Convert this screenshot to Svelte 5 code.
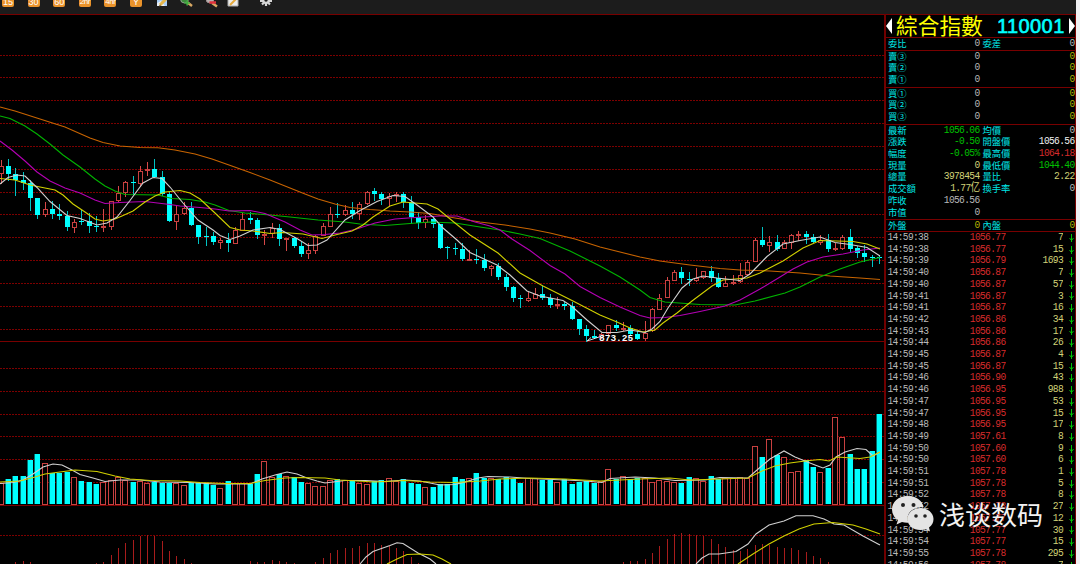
<script>
    const step = 7.318;
    const x = (i) => 1.3 + i * step;

    // kind, high, low, body top, body bottom, volume top
    const candles = `
r 160 184 166 173.5 483|c 158.5 180.5 165.5 174 479|c 167.5 196 174 180 476|c 172 189.5 180 182.5 476|c 180 211 182.5 197.5 460
c 197.5 218.5 197.5 214.5 453.5|r 201.5 217 209 215 462.5|c 200.5 218.5 209 214 472.5|c 203.5 220 214 216 472.5|c 211 231 215.5 227 471.5
r 218.5 233 221.5 227.5 476.5|c 210 225 220.5 221.5 480.5|c 213 232.5 221 226 482|c 215.5 231.5 225.5 226.5 484|r 209 232 226 227.5 482
r 200.5 230 200.5 226.5 479.5|r 186 202 192.5 201 476.5|r 181 196.5 182 193 479.5|c 175.5 194.5 181.5 182.5 482|r 166 187 170.5 183.5 480.5
r 161.5 176 169 171 483|c 158.5 178 169 176.5 481.5|c 171 195.5 176.5 193.5 482.5|c 192 221.5 193.5 221 482.5|r 205 230 213.5 221.5 482.5
r 201.5 214.5 207.5 213.5 484.5|c 201.5 225.5 208 224.5 482.5|c 224.5 243.5 224.5 236.5 483|c 226.5 245.5 236 237 483|c 232 245 236 241.5 485
r 237.5 248.5 240 242.5 488|c 233 252 239.5 243 481|r 226.5 243.5 230 243.5 483|r 213 230.5 218.5 230.5 483|c 211.5 223.5 218 220 483.5
c 217.5 238.5 220 234.5 473.5|r 229.5 245 233.5 235 461|r 222.5 238 227.5 233.5 476.5|c 223.5 246 228 238.5 473.5|r 237.5 250.5 238 239.5 475.5
c 236.5 247.5 238 246 477|c 241 257 246 253.5 482|r 242.5 258.5 250 253.5 483|r 235 253.5 235.5 250.5 486|r 222.5 235.5 225.5 235.5 485.5
r 207 226.5 214 226.5 479.5|c 203 217.5 213.5 215 478.5|r 204.5 215.5 209.5 215 480|c 202 219 209.5 213.5 480|r 202 219.5 203.5 213.5 483
r 190.5 204.5 191.5 204 483.5|c 187.5 200.5 191 194 480.5|c 192 205 193.5 199 480|r 192.5 206.5 195.5 199 477.5|r 192 202 194 195.5 481
c 192 207.5 193.5 201.5 478.5|c 196 223.5 201.5 217 483|c 212 228.5 216.5 223 484|r 215 228 219 223 486.5|c 215.5 228 218.5 224 487
c 224 249 224 247.5 483.5|c 245.5 258.5 247 248 483.5|c 243 255 248 249 476.5|c 243 260.5 249 259 478.5|r 249.5 261 259 261 477.5
c 248.5 263.5 259 260 472.5|c 254 271 259.5 268 477.5|r 265 276 266 268.5 477.5|c 263 280 266 277 479|c 274 291 277 287 477
c 286 301.5 287 298 478.5|c 295 307.5 297.5 299 482.5|r 291.5 301.5 298 300.5 477.5|r 288 299 294 298.5 478|c 285.5 300 294 298 480
c 294 307.5 297.5 305 479.5|r 297 308.5 304 305.5 481.5|c 300.5 309.5 303.5 306 478.5|c 301.5 320 306 319 484|c 319 335 319 329 481.5
c 325 341.5 329 336 481|c 330 338.5 336 337.5 483|r 332.5 339 333.5 338 480.5|r 324.5 335 325 334 468.5|c 320 331 324.5 328 479
r 322 330.5 327.5 329 475.5|c 325 336 327.5 333.5 479|c 330.5 339.5 333.5 338.5 478|r 321 340.5 332.5 339 477.5|r 307.5 331.5 309 331 481.5
r 293.5 310 297.5 309.5 479.5|r 277 298 280 297.5 480.5|r 269.5 281 272 281 481.5|c 266.5 283.5 272 278 482.5|c 272 285.5 278.5 280 477
r 268 282 277.5 280.5 478|r 270.5 279 271 278 480.5|c 265.5 281.5 271 278 475.5|c 272.5 288 278 286.5 479|r 276 287 282.5 287 478
r 275 285 281.5 282.5 478|r 263 282.5 275 281.5 476.5|r 259.5 275.5 261.5 275 478|r 238 262 239.5 261.5 445.5|c 226.5 246.5 239.5 244.5 457
r 235.5 252 242 245.5 438.5|c 235 251 242 248.5 455|r 240 249 241.5 248.5 456.5|r 233.5 248.5 234.5 242.5 472|r 230.5 240.5 233.5 234.5 470.5
c 230.5 244 234 236.5 459.5|c 233.5 243 236.5 241.5 466.5|r 235 245 240 242.5 471.5|c 233.5 251.5 240 249 467.5|r 243 251 248 250 416.5
r 235 250 236.5 248.5 436.5|c 229 251.5 236.5 248.5 454|c 246 258 248 253 469|c 244.5 261.5 252.5 257 469|c 254.5 267 257 258 450.5
c 254.5 263.5 257 258 414`
        .trim()
        .split(/[|\n]/)
        .map((row, i) => {
            const [kind, ...n] = row.split(" ");
            const [high, low, top, bottom, vol] = n.map((v) => Math.round(+v));
            return { kind, x: Math.round(x(i) - 0.5), high, low, top, bottom: Math.max(bottom, top + 1), vol };
        });

    const priceLines = [
        ["orange", "0,107 15,111 40,119 65,127 90,138 103,142.5 120,146 140,147.5 158,147.8 175,150 195,154 212,159 229,165 250,172.5 270,180 290,188 305,194 318,199 335,204 350,207.5 370,209.5 390,211 410,212 430,213.5 455,218 480,222 505,225 530,229 550,233 575,239 600,247 620,252 640,257 660,261 690,265 720,268.5 740,270 770,271 800,273 830,276 860,278 880,279.5"],
        ["green", "0,116 10,118.5 25,126 37,134 50,144 63,155 80,167 95,179 105,186 115,191 125,194.5 158,195 172,198.5 190,199.5 205,202 215,205 229,210.5 245,213 270,215 290,217 318,220 345,222 360,224 385,225.5 410,223.5 430,222 455,223 480,227 500,230 520,234 540,238.5 570,251 600,266 620,277 640,290 650,297.5 665,302 700,304.5 735,305 755,301 785,293 800,287 820,277 840,269 860,262 880,257.5"],
        ["magenta", "0,141 12,150 25,161 37,172 50,181 65,188 80,193 95,200 105,203.5 120,202.5 145,201.5 170,204.5 180,206 200,207.5 215,209 229,211 250,210.5 265,213.5 285,222 300,230 312,235 325,234.5 340,233 355,229.5 375,223 395,219 415,217.5 440,216 457,216 475,222 490,226 500,230 512,239 530,250.5 550,265.5 565,274 580,286.5 600,297.5 620,307 640,315.5 650,318 665,317.5 680,315.5 700,311.5 725,306 740,300 760,289 780,277 793,269 807,262 823,257 843,254 863,250 880,248"],
        ["yellow", "0,178.5 15,180 30,185 45,188 55,190 63,195 73,204 85,212 95,219 103,221 115,219 122,216 133,211 145,202 155,196 165,192 180,190.5 190,193 200,199 215,213 230,227.5 240,230 253,231 270,233.5 283,232.5 303,234 322,238.5 337,234.5 352,231 363,225 373,217 390,206 403,202 427,204 438,209 455,223 470,235 498,253 520,273 543,286 573,301 600,315 617,322 630,328 643,332 655,330 663,323 677,313 692,301 712,286 723,280 747,278 760,273 783,261 803,248 820,240.5 837,241 853,241.5 867,244 880,249"],
        ["white", "0,184 8,177.5 17,175 25,176 37,187.5 50,201.5 67,215.5 80,218.5 97,225 107,223 117,217 130,200.5 143,183 153,177.5 162,178.5 170,187 183,203 198,220 213,230 220,235.5 230,239.5 240,236 253,230 270,227.5 280,229.5 297,238.5 308,245.5 317,245 327,240 345,220 360,210.5 377,201.5 393,195.5 405,196.5 417,205 433,217 443,228 457,240 470,252.5 497,265 510,275 527,291 540,296 563,300.5 572,306.5 587,320 602,332.5 617,332.5 630,330 645,332.5 652,329 660,321.5 668,308 682,288 693,279 703,276 717,278 740,280.5 750,274 767,256.5 783,244 800,240.5 820,237 835,242.5 850,244.5 867,247.5 880,256"],
    ];

    const volumeLines = [
        ["white", "0,483.5 13,482.5 23,480 33,474 43,467 53,464 62,465 72,470 80,474.5 93,478 105,481.5 120,480 140,480 160,482 190,482.5 215,484 250,484 262,479 275,475 287,472 297,474 307,478 317,481 325,483 345,480.5 365,480.5 385,481.5 405,480 420,481 430,483 440,485 455,484.5 465,482 478,478 488,476.5 510,477 530,478.5 565,480 586,481 602,482.5 610,478.5 635,477 655,478 675,480.5 705,480 720,477.5 748,478 757,470 770,459 784,451 795,457 805,461 815,465 823,468 830,465 836,457 845,452 857,448.5 866,449.5 873,456 880,452"],
        ["yellow", "0,482 20,481 35,477 45,474 60,472 75,470 97,471.5 115,476 130,479 150,480.5 180,481 200,482.5 225,483.5 250,483.5 265,480.5 285,478 300,477.5 325,478 340,480 375,482 405,480.5 430,482 455,482.5 480,481 500,479 530,478 565,479 600,481 640,479 670,478 690,480 720,479 748,478 762,471 775,466 790,463 805,461 820,459.5 829,461 837,457 860,458.5 870,457 880,452"],
    ];

    const macdLines = [
        ["white", "360,564 366,557 373,551.5 390,545.5 397,542.7 403,543.5 418,553 430,559 436,564"],
        ["yellow", "387,564 397,559 407,554.5 420,554 433,555 442,559 451,564"],
        ["white", "696,564 702,558 709,554 719,554 736,551.5 748,544 756,534 769,525 784,521 796,515.7 813,515.7 824,519 834,524 844,525 863,536 880,545"],
        ["yellow", "738,564 753,554 769,544 784,536 799,529 814,524 833,522.5 853,525 866,529 880,534"],
    ];

    // first candle index, then bar tops
    const macdBars = [
        [2, [562, 561, 562]],
        [13, [563, 562, 555, 548, 543, 540, 536, 535, 536, 541, 551, 556, 559, 563]],
        [34, [561, 562, 562, 560, 561, 562, 563]],
        [43, [562, 558, 553, 550, 548, 548, 546, 543, 543, 545, 546, 548, 551, 557, 563]],
        [85, [562, 561, 561, 559, 553, 546, 539, 534, 533, 534, 535, 536, 539, 544, 547, 550, 551, 549, 545, 544, 545, 547, 548, 548, 550, 552, 556, 558, 562]],
    ].flatMap(([start, tops]) => tops.map((top, i) => ({ x: Math.round(x(start + i) - 0.5), top })));

    const grid = [55, 77, 100, 123, 146, 169, 192, 214, 237, 260, 283, 306, 329, 368, 391, 414, 436, 459, 482, 535];

    const periods = ["15", "30", "60", "2hr", "4hr", "Y"];

    const asks = ["賣③", "賣②", "賣①"];
    const bids = ["買①", "買②", "買③"];

    const quotes = [
        ["最新", "1056.06", "g", "均價", "0", "w"],
        ["漲跌", "-0.50", "g", "開盤價", "1056.56", "b"],
        ["幅度", "-0.05%", "g", "最高價", "1064.18", "r"],
        ["現量", "0", "y", "最低價", "1044.40", "g"],
        ["總量", "3978454", "y", "量比", "2.22", "y"],
        ["成交額", "1.77亿", "y", "換手率", "0", "w"],
        ["昨收", "1056.56", "w", "", "", "w"],
        ["市值", "0", "w", "", "", "w"],
    ];

    const ticks = [
        ["38", "1056.77", 7], ["38", "1056.77", 15], ["39", "1056.79", 1693], ["40", "1056.87", 7],
        ["40", "1056.87", 57], ["41", "1056.87", 3], ["41", "1056.87", 16], ["42", "1056.86", 34],
        ["43", "1056.86", 17], ["44", "1056.86", 26], ["45", "1056.87", 4], ["45", "1056.87", 15],
        ["46", "1056.90", 43], ["46", "1056.95", 988], ["47", "1056.95", 53], ["47", "1056.95", 15],
        ["48", "1056.95", 17], ["49", "1057.61", 8], ["50", "1057.60", 9], ["50", "1057.60", 6],
        ["51", "1057.78", 1], ["51", "1057.78", 5], ["52", "1057.78", 8], ["52", "1057.78", 27],
        ["53", "1057.77", 12], ["54", "1057.77", 30], ["54", "1057.77", 15], ["55", "1057.78", 295],
        ["56", "1057.78", 7],
    ];
</script>

<div class="screen">
    <div class="window">
        <div class="toolbar">
            {#each periods as p}
                <span class="period" class:small={p.length > 2}>{p}</span>
            {/each}
            <svg class="tools" width="125" height="8" viewBox="0 0 125 8">
                <rect x="1" y="0" width="10" height="6" fill="#a9cdf5" />
                <path d="M1 3L5 1L9 6H1Z" fill="#e8eef5" />
                <path d="M4 5L10 -1" stroke="#e5b64c" stroke-width="3" />
                <path d="M3 6L5 5" stroke="#8a6a30" />
                <circle cx="28.500" cy="-1" r="4" fill="#3b8b3b" stroke="#8fa08f" />
                <path d="M31 2L36 6" stroke="#d9a964" stroke-width="2.500" />
                <path d="M28.500 3H34M31.200 0.500V5.500" stroke="#3fae3f" stroke-width="1.600" />
                <circle cx="54" cy="-1" r="4" fill="#b9b0b0" stroke="#a09090" />
                <path d="M56 3L61 6.500" stroke="#d9a964" stroke-width="2.500" />
                <path d="M53.500 2.500H60" stroke="#e0303c" stroke-width="2.500" />
                <path d="M72 -1H82V6H72Z" fill="#ececec" stroke="#aaa" />
                <path d="M74 5L80 -1" stroke="#e5a93c" stroke-width="2" />
                <circle cx="110" cy="0" r="4" fill="#d5d5d5" />
                <path d="M104 1H107M113 1H116M106 4.500L108 2.500M114 4.500L112 2.500M110 3V6" stroke="#d5d5d5" stroke-width="2.200" />
                <circle cx="110" cy="0" r="1.700" fill="#1c1c1c" />
            </svg>
        </div>

        <div class="main">
            <svg class="chart" width="886" height="550" viewBox="0 14 886 550">
                <g shape-rendering="crispEdges">
                    {#each grid as y}
                        <line class="grid" x1="0" x2="884" y1={y + 0.5} y2={y + 0.5} />
                    {/each}
                    <rect class="rule" x="0" y="14" width="886" height="1" />
                    <rect class="rule" x="0" y="341" width="884" height="1" />
                    <rect class="rule" x="0" y="505" width="884" height="1" />
                    <rect class="edge" x="884" y="14" width="2" height="550" />

                    {#each candles as c}
                        {#if c.kind === "c"}
                            <rect class="wick-down" x={c.x} y={c.high} width="1" height={c.low - c.high} />
                            <rect class="down" x={c.x - 2} y={c.top} width="5" height={c.bottom - c.top} />
                            <rect class="down" x={c.x - 2} y={c.vol} width="5" height={504 - c.vol} />
                            <rect class="shade" x={c.x - 3} y={c.vol} width="1" height={504 - c.vol} />
                        {:else}
                            <rect class="up" x={c.x} y={c.high} width="1" height={Math.max(c.top - c.high, 0)} />
                            <rect class="up" x={c.x} y={c.bottom} width="1" height={Math.max(c.low - c.bottom, 0)} />
                            <rect class="hollow" x={c.x - 1.5} y={c.top + 0.5} width="4" height={Math.max(c.bottom - c.top - 1, 1)} />
                            <rect class="hollow" x={c.x - 2.5} y={c.vol + 0.5} width="5" height={504 - c.vol} />
                        {/if}
                    {/each}

                    {#each macdBars as b}
                        <rect class="macd" x={b.x} y={b.top} width="1" height={564 - b.top} />
                    {/each}
                </g>

                {#each [...priceLines, ...volumeLines, ...macdLines] as [color, points]}
                    <polyline class="ma {color}" {points} />
                {/each}

                <path class="pointer" d="M587 341L599 337M587 341L591 337.500" />
                <text class="low" x="599" y="341">873.25</text>
            </svg>

            <div class="panel">
                <div class="title">
                    <svg width="6" height="16" viewBox="0 0 6 16"><path d="M6 0V16L0 8Z" fill="#fff" /></svg>
                    <span class="name">綜合指數</span>
                    <span class="code">110001</span>
                    <svg width="6" height="16" viewBox="0 0 6 16"><path d="M0 0V16L6 8Z" fill="#fff" /></svg>
                </div>
                <div class="block single">
                    <div class="row"><span>委比</span><b class="w">0</b><span>委差</span><b class="w">0</b></div>
                </div>
                <div class="block depth">
                    {#each asks as label}
                        <div class="row"><span>{label}</span><b class="w">0</b><span></span><b class="d">0</b></div>
                    {/each}
                </div>
                <div class="block depth">
                    {#each bids as label}
                        <div class="row"><span>{label}</span><b class="w">0</b><span></span><b class="d">0</b></div>
                    {/each}
                </div>
                <div class="block quotes">
                    {#each quotes as [l1, v1, c1, l2, v2, c2]}
                        <div class="row"><span>{l1}</span><b class={c1}>{v1}</b><span>{l2}</span><b class={c2}>{v2}</b></div>
                    {/each}
                </div>
                <div class="block single">
                    <div class="row"><span>外盤</span><b class="d">0</b><span>內盤</span><b class="d">0</b></div>
                </div>
                <div class="ticks">
                    {#each ticks as [sec, price, lots]}
                        <div class="tick">
                            <b class="w">14:59:{sec}</b>
                            <b class="r">{price}</b>
                            <b class="y">{lots}</b>
                            <svg width="5" height="8" viewBox="0 0 5 8"><path d="M2.500 0V8M0.500 4L2.500 6.500L4.500 4" stroke="#00c000" fill="none" /></svg>
                        </div>
                    {/each}
                </div>
            </div>
        </div>
    </div>

    <div class="watermark">
        <svg width="43" height="36" viewBox="0 0 43 36">
            <path d="M17 0C7 0 1 6 1 13.500C1 18 3.300 21.500 7 24L5.500 28.500L11 26C13 26.600 15 27 17.500 26.800C14 18 21 11 32.500 11C31 4 25 0 17 0Z" fill="#e4e4e4" />
            <path d="M29.500 12C21.500 12 16.500 17 16.500 23C16.500 29.500 22 34 29.500 34C31.500 34 33 33.700 35 33.200L39 35.500L38 31.500C41 29.300 42.500 26.500 42.500 23C42.500 17 37 12 29.500 12Z" fill="#e4e4e4" />
            <g fill="#222">
                <circle cx="12" cy="9" r="2" />
                <circle cx="22.500" cy="9" r="2" />
                <circle cx="25" cy="20" r="1.800" />
                <circle cx="34" cy="20" r="1.800" />
            </g>
        </svg>
        <span>浅谈数码</span>
    </div>
</div>

<style>
    :global(body) {
        background: #000;
        overflow: hidden;
    }

    .screen {
        position: relative;
        width: 1080px;
        height: 564px;
        overflow: hidden;
        background: #f0f0f2;
    }

    .window {
        width: 1076px;
        height: 564px;
        background: #000;
    }

    .toolbar {
        display: flex;
        height: 14px;
        background: #1c1c1c;
        padding-left: 2px;
        box-sizing: border-box;
    }

    .period {
        width: 12px;
        height: 7px;
        margin-right: 13.6px;
        background: #ea932b;
        border-radius: 0 0 2px 2px;
        color: #fff;
        font: 9px/4px "Liberation Sans", sans-serif;
        text-align: center;
        overflow: hidden;
    }

    .period.small {
        font-size: 8px;
        letter-spacing: -0.5px;
    }

    .main {
        display: flex;
        height: 550px;
    }

    .chart {
        display: block;
        flex: none;
    }

    .grid {
        stroke: #7c0000;
        stroke-dasharray: 2 1;
    }

    .rule {
        fill: #780000;
    }

    .edge {
        fill: #700000;
    }

    .down {
        fill: #00ffff;
    }

    .wick-down {
        fill: #00c4c4;
    }

    .shade {
        fill: #006f6f;
    }

    .up {
        fill: #d84848;
    }

    .hollow {
        fill: #000;
        stroke: #c84040;
    }

    .macd {
        fill: #a81c1c;
    }

    .ma {
        fill: none;
        stroke-width: 1.1;
    }

    .orange {
        stroke: #c86400;
    }

    .green {
        stroke: #00b400;
    }

    .magenta {
        stroke: #b400b4;
    }

    .yellow {
        stroke: #d0d000;
    }

    .white {
        stroke: #d0d0d0;
    }

    .pointer {
        stroke: #ddd;
        fill: none;
    }

    .low {
        fill: #fff;
        font: bold 9.500px "Liberation Mono", monospace;
    }

    .panel {
        width: 190px;
        border-top: 1px solid #780000;
        border-right: 1px solid #780000;
        box-sizing: border-box;
        overflow: hidden;
    }

    .title {
        display: flex;
        align-items: center;
        height: 22px;
        line-height: 22px;
        white-space: nowrap;
    }

    .title svg {
        flex: none;
    }

    .name {
        color: #ffff00;
        font-family: "Noto Sans CJK TC", sans-serif;
        font-size: 21.7px;
        line-height: 20px;
        width: 87px;
        margin: -2px 0 0 4px;
    }

    .code {
        color: #00ffff;
        font: 20px/23px "Liberation Sans", sans-serif;
        letter-spacing: 0.4px;
        width: 70px;
        margin: 1px 2px 0 14px;
        -webkit-text-stroke: 0.6px #00ffff;
    }

    .block {
        border-top: 1px solid #780000;
        box-sizing: border-box;
        padding-left: 2px;
    }

    .single {
        height: 12.5px;
    }

    .depth {
        height: 37px;
    }

    .quotes {
        height: 95px;
    }

    .row {
        display: grid;
        grid-template-columns: 32px 59.5px 32.5px 62.500px;
        height: 11.74px;
        line-height: 11.74px;
    }

    .row span {
        color: #00e6e6;
        font: 9.300px/11.700px "Noto Sans CJK TC", sans-serif;
        white-space: nowrap;
    }

    .row span:nth-child(3) {
        padding-left: 3px;
    }

    b {
        font-family: "Liberation Mono", "Noto Sans CJK SC", monospace;
        font-size: 9.600px;
        font-weight: normal;
        letter-spacing: -0.66px;
        text-align: right;
        white-space: nowrap;
        transform: scaleY(1.15);
    }

    .w {
        color: #b8b8b8;
    }

    .b {
        color: #f0f0f0;
    }

    .g {
        color: #00c000;
    }

    .r {
        color: #d82c2c;
    }

    .y {
        color: #d2d278;
    }

    .d {
        color: #b4b400;
    }

    .ticks {
        border-top: 1px solid #780000;
    }

    .tick {
        display: grid;
        grid-template-columns: 50px 68px 57.500px 5px;
        align-items: center;
        padding-left: 1.500px;
        height: 11.71px;
        line-height: 11.71px;
    }

    .tick b:first-child {
        text-align: left;
    }

    .tick svg {
        margin-left: 5.500px;
    }

    .watermark {
        position: absolute;
        left: 891px;
        top: 496px;
        display: flex;
        align-items: center;
        color: #f2f2f2;
        font: 26px/36px "Noto Sans CJK SC", sans-serif;
        white-space: nowrap;
    }

    .watermark span {
        margin-left: 5px;
    }
</style>
